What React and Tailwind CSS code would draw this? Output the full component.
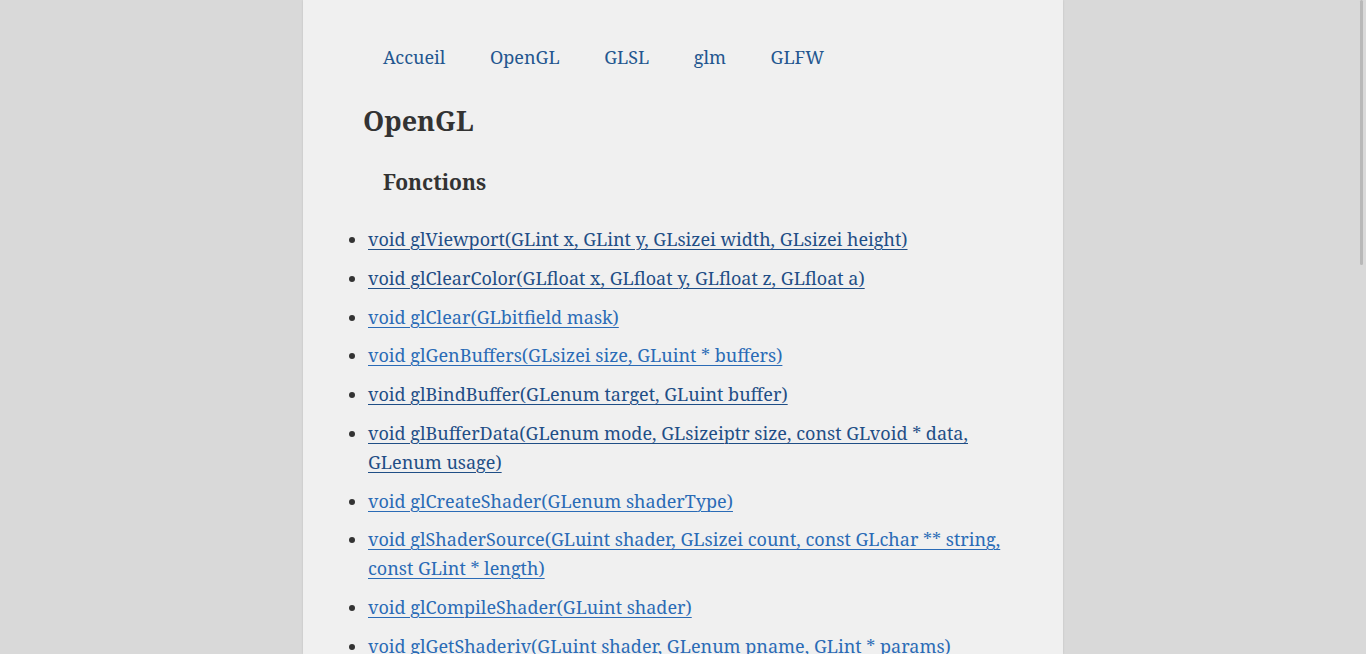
import React from "react";

const items = [
  { t: "void glViewport(GLint x, GLint y, GLsizei width, GLsizei height)", d: true },
  { t: "void glClearColor(GLfloat x, GLfloat y, GLfloat z, GLfloat a)", d: true },
  { t: "void glClear(GLbitfield mask)", d: false },
  { t: "void glGenBuffers(GLsizei size, GLuint * buffers)", d: false },
  { t: "void glBindBuffer(GLenum target, GLuint buffer)", d: true },
  { t: "void glBufferData(GLenum mode, GLsizeiptr size, const GLvoid * data, GLenum usage)", d: true },
  { t: "void glCreateShader(GLenum shaderType)", d: false },
  { t: "void glShaderSource(GLuint shader, GLsizei count, const GLchar ** string, const GLint * length)", d: false },
  { t: "void glCompileShader(GLuint shader)", d: false },
  { t: "void glGetShaderiv(GLuint shader, GLenum pname, GLint * params)", d: false },
];

const nav = ["Accueil", "OpenGL", "GLSL", "glm", "GLFW"];

export default function App() {
  return (
    <div
      className="relative h-screen overflow-hidden bg-[#d9d9d9] text-[#333333]"
      style={{ fontFamily: '"Noto Serif", "DejaVu Serif", serif' }}
    >
      <div className="mx-auto h-full w-[760px] bg-[#f0f0f0] shadow-[0_0_2px_rgba(0,0,0,0.12)]">
        <nav className="flex gap-[44.5px] pl-[80px] pt-[43px] text-[18px] leading-[28px] text-[#23568f]">
          {nav.map((n) => (
            <a key={n} href="#">{n}</a>
          ))}
        </nav>
        <h1 className="mt-[32px] pl-[60px] text-[27px] font-bold leading-[36px] text-[#333333]">OpenGL</h1>
        <h2 className="mt-[28px] pl-[80px] text-[21px] font-bold leading-[30px] text-[#333333]">Fonctions</h2>
        <ul className="ml-[65px] mr-[60px] mt-[28px] list-disc text-[18px] leading-[28.8px]">
          {items.map((it) => (
            <li key={it.t} className="mb-[10px]">
              <a
                href="#"
                className={
                  "underline decoration-1 underline-offset-[3px] " +
                  (it.d ? "text-[#1f4e86]" : "text-[#2a6bb6]")
                }
              >
                {it.t}
              </a>
            </li>
          ))}
        </ul>
      </div>
      <div className="absolute right-[3px] top-0 h-[265px] w-[3px] rounded-full bg-[#b8b8b8]" />
    </div>
  );
}
